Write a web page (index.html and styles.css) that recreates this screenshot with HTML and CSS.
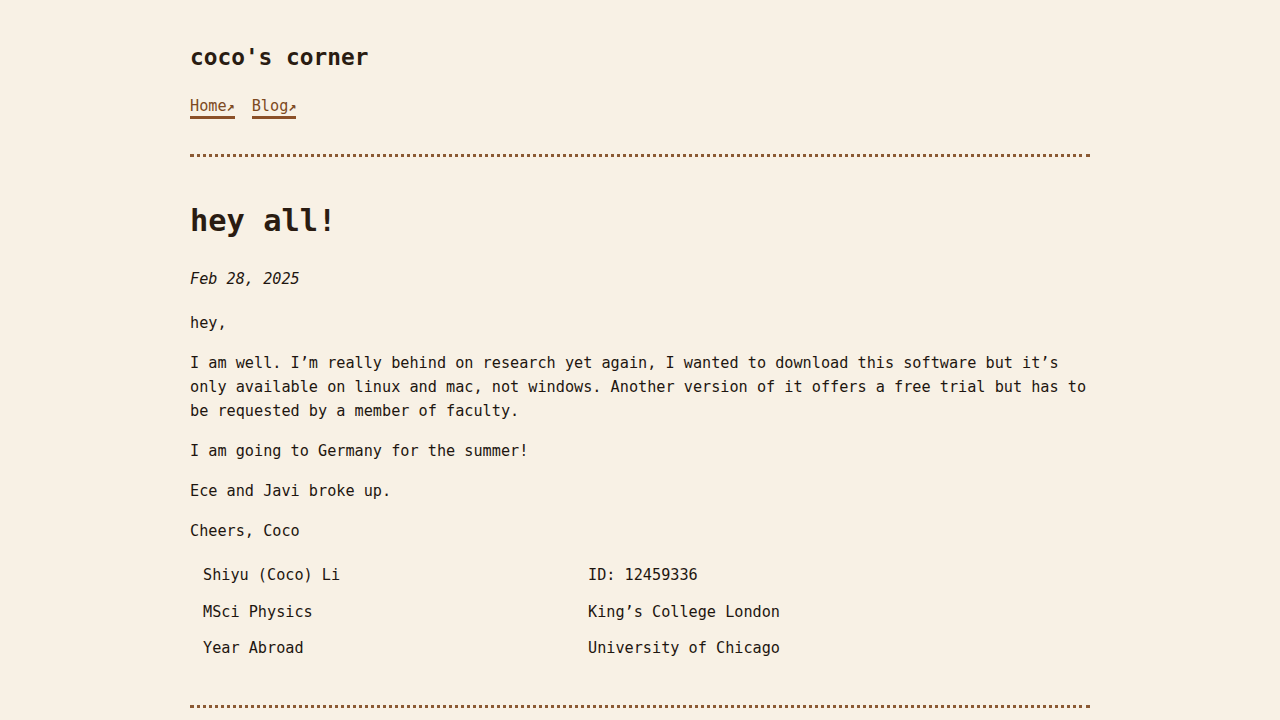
FILE: index.html
```html
<!DOCTYPE html>
<html lang="en">
<head>
<meta charset="utf-8">
<title>hey all! | coco's corner</title>
<link rel="stylesheet" href="styles.css">
</head>
<body>
<div class="page">
  <header class="site-header">
    <div class="site-title">coco's corner</div>
    <nav class="nav">
      <a class="nav-link" href="#">Home<span class="arrow">↗</span></a>
      <a class="nav-link" href="#">Blog<span class="arrow">↗</span></a>
    </nav>
  </header>
  <main class="post">
    <h1 class="post-title">hey all!</h1>
    <div class="post-date">Feb 28, 2025</div>
    <p class="first">hey,</p>
    <p>I am well. I’m really behind on research yet again, I wanted to download this software but it’s only available on linux and mac, not windows. Another version of it offers a free trial but has to be requested by a member of faculty.</p>
    <p>I am going to Germany for the summer!</p>
    <p>Ece and Javi broke up.</p>
    <p>Cheers, Coco</p>
    <div class="info">
      <div class="cell">Shiyu (Coco) Li</div>
      <div class="cell">ID: 12459336</div>
      <div class="cell">MSci Physics</div>
      <div class="cell">King’s College London</div>
      <div class="cell">Year Abroad</div>
      <div class="cell">University of Chicago</div>
    </div>
  </main>
  <footer class="site-footer"></footer>
</div>
</body>
</html>
```

FILE: styles.css
```css
html, body {
  margin: 0;
  padding: 0;
  background: #f8f1e5;
}
body {
  font-family: "DejaVu Sans Mono", "Liberation Mono", monospace;
  font-size: 15.2px;
  line-height: 24px;
  color: #1e1610;
}
.page {
  width: 900px;
  margin: 0 auto;
}
.site-header {
  padding-top: 42px;
  padding-bottom: 35px;
  border-bottom: 3px dotted #8b5a34;
}
.site-title {
  font-size: 22.8px;
  line-height: 30px;
  font-weight: bold;
  color: #2a1c12;
}
.nav {
  margin-top: 24px;
  display: flex;
  gap: 17px;
}
.nav-link {
  display: inline-block;
  line-height: 20px;
  color: #7d4a22;
  text-decoration: none;
  border-bottom: 3px solid #8b5028;
}
.arrow {
  font-size: 13.5px;
  font-weight: bold;
}
.post {
  padding-top: 46px;
}
.post-title {
  margin: 0;
  font-size: 30.4px;
  line-height: 36px;
  font-weight: bold;
  color: #2a1c12;
}
.post-date {
  margin-top: 28px;
  font-style: italic;
}
.post p {
  margin: 16px 0 0;
}
.post p.first {
  margin-top: 20px;
}
.info {
  margin-top: 14px;
  display: grid;
  grid-template-columns: 385px 1fr;
}
.cell {
  padding: 6px 13px;
  line-height: 24.5px;
}
.site-footer {
  margin-top: 38px;
  border-bottom: 3px dotted #8b5a34;
}
```
